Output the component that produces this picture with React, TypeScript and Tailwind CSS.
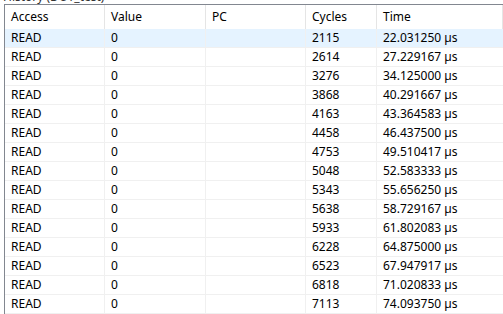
const rows: [number, string][] = [
  [2115, '22.031250 µs'],
  [2614, '27.229167 µs'],
  [3276, '34.125000 µs'],
  [3868, '40.291667 µs'],
  [4163, '43.364583 µs'],
  [4458, '46.437500 µs'],
  [4753, '49.510417 µs'],
  [5048, '52.583333 µs'],
  [5343, '55.656250 µs'],
  [5638, '58.729167 µs'],
  [5933, '61.802083 µs'],
  [6228, '64.875000 µs'],
  [6523, '67.947917 µs'],
  [6818, '71.020833 µs'],
  [7113, '74.093750 µs'],
];

const cols = [
  { label: 'Access', w: 'w-[100px]' },
  { label: 'Value', w: 'w-[101px]' },
  { label: 'PC', w: 'w-[100px]' },
  { label: 'Cycles', w: 'w-[71px]' },
  { label: 'Time', w: 'flex-1' },
];

export default function App() {
  return (
    <div
      className="w-[503px] h-[314px] overflow-hidden bg-white text-[12px] text-black"
      style={{ fontFamily: '"Noto Sans", "Open Sans", sans-serif' }}
    >
      {/* group title, mostly scrolled off */}
      <div className="h-[4px] overflow-hidden relative">
        <div className="absolute left-[3px] bottom-[-1px] leading-[16px] text-[#333]">
          History (DUT_test)
        </div>
      </div>
      <div className="ml-[4px] border-l border-t border-[#828790]">
        <div className="flex h-[24px] items-center">
          {cols.map((c) => (
            <div
              key={c.label}
              className={`${c.w} h-full flex items-center pl-[6px] border-r border-[#e5e5e5]`}
            >
              {c.label}
            </div>
          ))}
        </div>
        {rows.map(([cyc, time], i) => (
          <div
            key={cyc}
            className={`flex h-[19px] border-b border-[#f0f0f0] ${i === 0 ? 'bg-[#e5f3ff]' : ''}`}
          >
            <div className="w-[100px] pl-[6px] flex items-center border-r border-[#f0f0f0]">READ</div>
            <div className="w-[101px] pl-[6px] flex items-center border-r border-[#f0f0f0]">0</div>
            <div className="w-[100px] pl-[6px] flex items-center border-r border-[#f0f0f0]"></div>
            <div className="w-[71px] pl-[6px] flex items-center border-r border-[#f0f0f0]">{cyc}</div>
            <div className="flex-1 pl-[6px] flex items-center">{time}</div>
          </div>
        ))}
      </div>
    </div>
  );
}
